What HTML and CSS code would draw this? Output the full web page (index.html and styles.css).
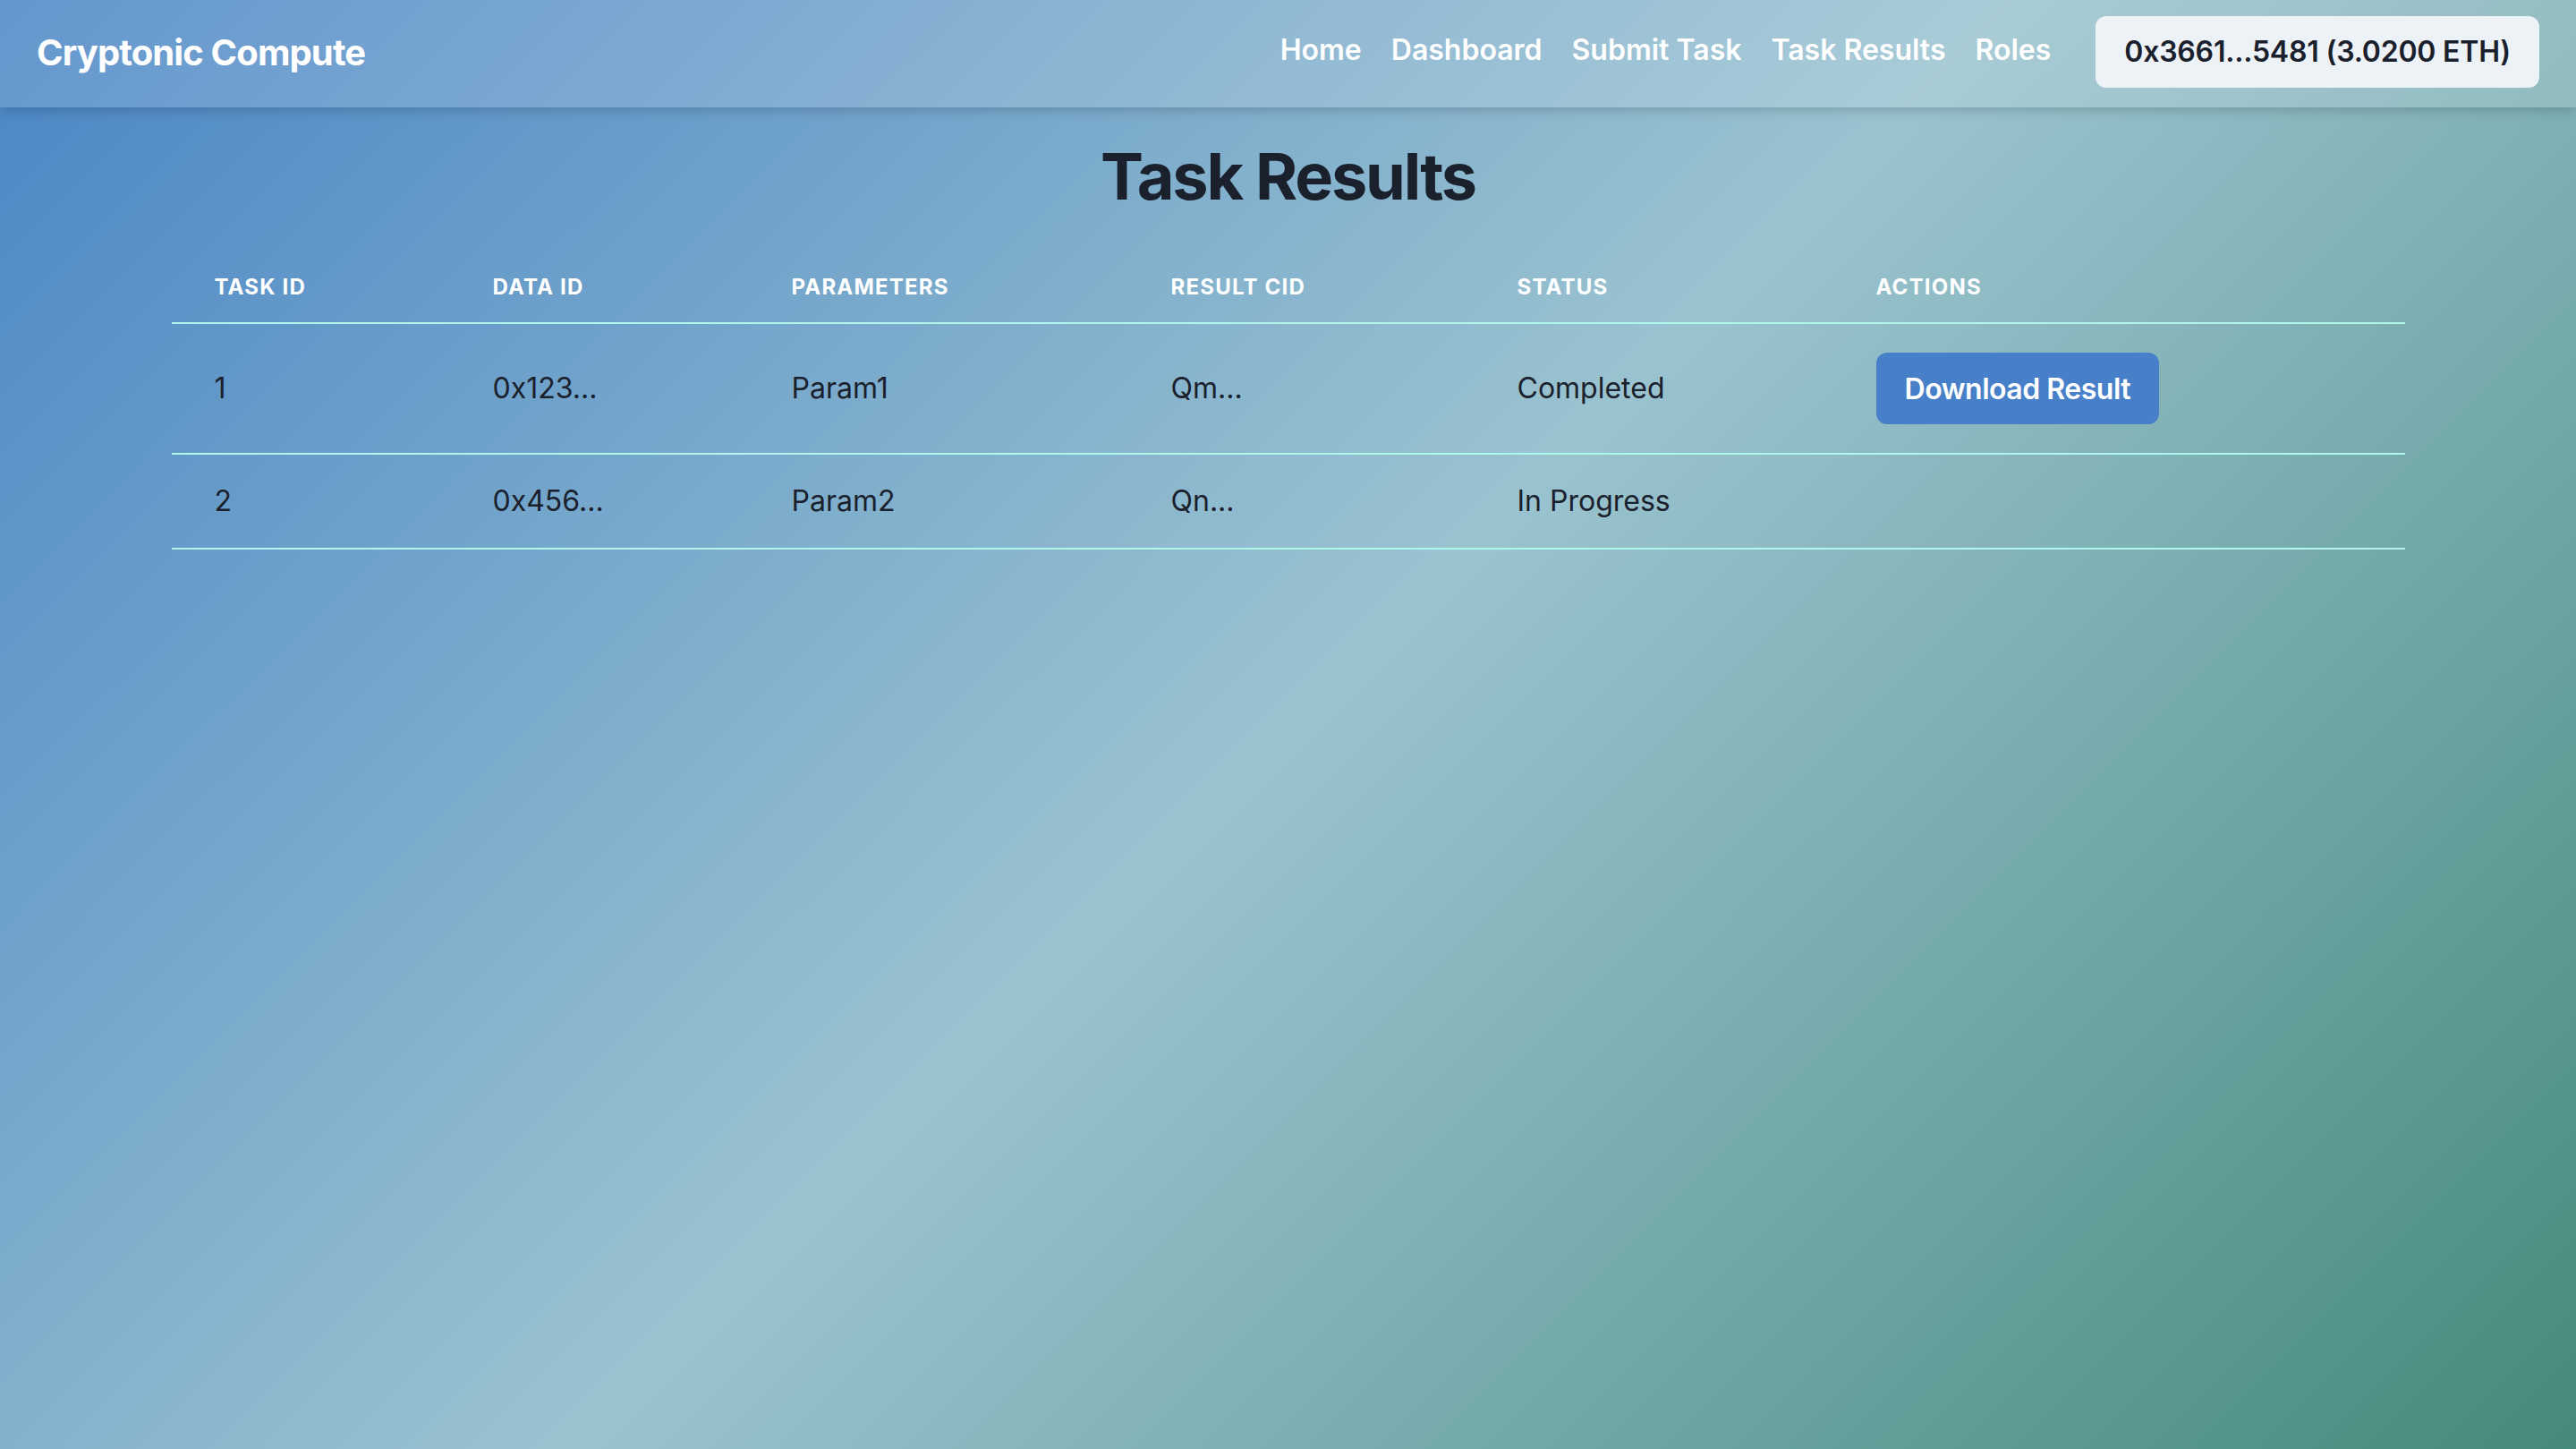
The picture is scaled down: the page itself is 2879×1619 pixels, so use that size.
FILE: index.html
```html
<!DOCTYPE html>
<html lang="en">
<head>
<meta charset="utf-8">
<title>Cryptonic Compute – Task Results</title>
<link rel="stylesheet" href="styles.css">
</head>
<body>
<header class="topbar">
  <div class="brand">Cryptonic Compute</div>
  <div class="topbar-right">
    <nav class="nav">
      <a class="nav-link" href="#">Home</a>
      <a class="nav-link" href="#">Dashboard</a>
      <a class="nav-link" href="#">Submit Task</a>
      <a class="nav-link" href="#">Task Results</a>
      <a class="nav-link" href="#">Roles</a>
    </nav>
    <button class="wallet">0x3661...5481 (3.0200 ETH)</button>
  </div>
</header>
<main class="container">
  <h1 class="page-title">Task Results</h1>
  <table class="results">
    <colgroup>
      <col class="c-task">
      <col class="c-data">
      <col class="c-params">
      <col class="c-cid">
      <col class="c-status">
      <col class="c-actions">
    </colgroup>
    <thead>
      <tr>
        <th>Task ID</th>
        <th>Data ID</th>
        <th>Parameters</th>
        <th>Result CID</th>
        <th>Status</th>
        <th>Actions</th>
      </tr>
    </thead>
    <tbody>
      <tr>
        <td>1</td>
        <td>0x123...</td>
        <td>Param1</td>
        <td>Qm...</td>
        <td>Completed</td>
        <td><button class="download">Download Result</button></td>
      </tr>
      <tr>
        <td>2</td>
        <td>0x456...</td>
        <td>Param2</td>
        <td>Qn...</td>
        <td>In Progress</td>
        <td></td>
      </tr>
    </tbody>
  </table>
</main>
</body>
</html>
```

FILE: styles.css
```css
html, body {
  margin: 0;
  padding: 0;
}

body {
  min-height: 100vh;
  font-family: Inter, "Noto Sans", "Liberation Sans", sans-serif;
  color: #1a202c;
  background: linear-gradient(135deg, #4a85c6 0%, #9ac3d0 50%, #468a7c 100%);
  background-attachment: fixed;
}

.topbar {
  height: 120px;
  box-sizing: border-box;
  padding: 0 41px;
  display: flex;
  align-items: center;
  justify-content: space-between;
  background: rgba(255, 255, 255, 0.15);
  box-shadow: 0 8px 12px -2px rgba(0, 0, 0, 0.1), 0 4px 8px -2px rgba(0, 0, 0, 0.06);
}

.brand {
  font-size: 40px;
  font-weight: 700;
  letter-spacing: -0.022em;
  color: #ffffff;
  line-height: 1.2;
  margin-top: -2px;
}

.topbar-right {
  display: flex;
  align-items: center;
  gap: 50px;
}

.nav {
  display: flex;
  align-items: center;
  gap: 33px;
  margin-top: -9px;
}

.nav-link {
  color: #ffffff;
  text-decoration: none;
  font-size: 32px;
  font-weight: 600;
  line-height: 1.5;
}

.wallet {
  height: 80px;
  padding: 0 32px;
  border: none;
  border-radius: 12px;
  background: #edf2f7;
  color: #1a202c;
  font-family: inherit;
  font-size: 32px;
  font-weight: 600;
  letter-spacing: -0.2px;
  margin-top: -5px;
}

.container {
  max-width: 2560px;
  margin: 0 auto;
  padding: 34px 32px 0;
  box-sizing: border-box;
}

.page-title {
  margin: 0 0 40px;
  text-align: center;
  font-size: 72px;
  font-weight: 700;
  letter-spacing: -0.03em;
  line-height: 1.2;
  color: #1a202c;
}

.results {
  width: 100%;
  table-layout: fixed;
  border-collapse: collapse;
}

.c-task { width: 311px; }
.c-data { width: 334px; }
.c-params { width: 424px; }
.c-cid { width: 387px; }
.c-status { width: 401px; }
.c-actions { width: auto; }

.results th {
  text-align: left;
  padding: 25px 48px 23px;
  font-size: 24px;
  font-weight: 700;
  line-height: 32px;
  letter-spacing: 0.05em;
  text-transform: uppercase;
  color: #ffffff;
  border-bottom: 2px solid #b2f5ea;
}

.results td {
  text-align: left;
  padding: 32px 48px;
  font-size: 32px;
  line-height: 40px;
  color: #1a202c;
  border-bottom: 2px solid #b2f5ea;
}

.download {
  height: 80px;
  padding: 0 32px;
  border: none;
  border-radius: 12px;
  background: #477fc8;
  color: #ffffff;
  font-family: inherit;
  font-size: 32px;
  font-weight: 600;
  letter-spacing: -0.015em;
  vertical-align: middle;
}
```
